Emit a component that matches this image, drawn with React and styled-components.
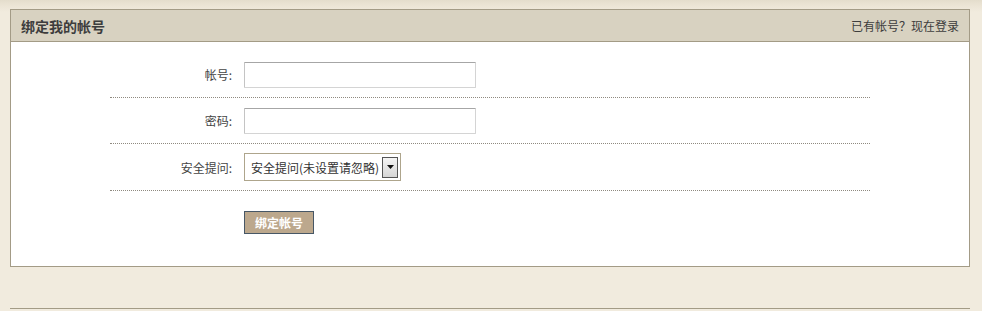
import React from 'react';
import styled, { createGlobalStyle } from 'styled-components';

const GlobalStyle = createGlobalStyle`
  body {
    margin: 0;
    background: #f1ebde;
    font-family: "Noto Sans CJK SC", "Liberation Sans", sans-serif;
    font-size: 12px;
    color: #333;
  }
`;

const Page = styled.div`
  min-height: 311px;
  padding: 9px 12px 0 10px;
  background: linear-gradient(to bottom, #e4ddcc 0px, #ece5d6 6px, #f1ebde 12px);
`;

const Panel = styled.div`
  border: 1px solid #a39b86;
  background: #fff;
`;

const Header = styled.div`
  display: flex;
  align-items: center;
  justify-content: space-between;
  height: 31px;
  padding: 0 10px;
  background: #d8d2c1;
  border-bottom: 1px solid #a39b86;
`;

const Title = styled.h3`
  margin: 0;
  font-size: 14px;
  font-weight: bold;
  color: #3d3d3d;
`;

const HeaderLink = styled.a`
  color: #3d3d3d;
  font-size: 12px;
  text-decoration: none;
`;

const Form = styled.div`
  width: 760px;
  margin: 0 auto;
  padding: 10px 0 32px;
`;

const Row = styled.div`
  display: flex;
  align-items: center;
  height: ${p => p.h || 45}px;
  border-bottom: 1px dotted #8f8a80;
`;

const Label = styled.label`
  width: 122px;
  margin-right: 12px;
  text-align: right;
  color: #444;
`;

const TextInput = styled.input`
  box-sizing: border-box;
  width: 232px;
  height: 26px;
  border: 1px solid #d4d4d4;
  border-top-color: #a6a6a6;
  border-left-color: #c4c4c4;
  border-radius: 1px;
  padding: 0 4px;
  outline: none;
`;

const SelectBox = styled.div`
  display: flex;
  align-items: center;
  box-sizing: border-box;
  height: 28px;
  padding: 0 2px 0 6px;
  border: 1px solid #aea58c;
  background: #fff;
  color: #333;
`;

const Arrow = styled.span`
  display: flex;
  align-items: center;
  justify-content: center;
  box-sizing: border-box;
  width: 16px;
  height: 21px;
  margin-left: 3px;
  border: 1px solid #555;
  background: linear-gradient(to bottom, #f4f4f4, #d6d6d6);
`;

const ButtonRow = styled.div`
  padding: 20px 0 0 134px;
`;

const Button = styled.button`
  height: 23px;
  width: 70px;
  padding: 0;
  border: 1px solid #475766;
  background: #bca88d;
  color: #fff;
  font-family: inherit;
  font-size: 12px;
  font-weight: bold;
`;

const FootLine = styled.div`
  margin-top: 41px;
  border-top: 1px solid #a39b86;
`;

export default function App() {
  return (
    <>
      <GlobalStyle />
      <Page>
        <Panel>
          <Header>
            <Title>绑定我的帐号</Title>
            <HeaderLink href="#">已有帐号？现在登录</HeaderLink>
          </Header>
          <Form>
            <Row>
              <Label>帐号:</Label>
              <TextInput type="text" />
            </Row>
            <Row>
              <Label>密码:</Label>
              <TextInput type="password" />
            </Row>
            <Row h={46}>
              <Label>安全提问:</Label>
              <SelectBox>
                安全提问(未设置请忽略)
                <Arrow>
                  <svg width="7" height="4" viewBox="0 0 7 4">
                    <path d="M0 0h7L3.5 4z" fill="#111" />
                  </svg>
                </Arrow>
              </SelectBox>
            </Row>
            <ButtonRow>
              <Button>绑定帐号</Button>
            </ButtonRow>
          </Form>
        </Panel>
        <FootLine />
      </Page>
    </>
  );
}
